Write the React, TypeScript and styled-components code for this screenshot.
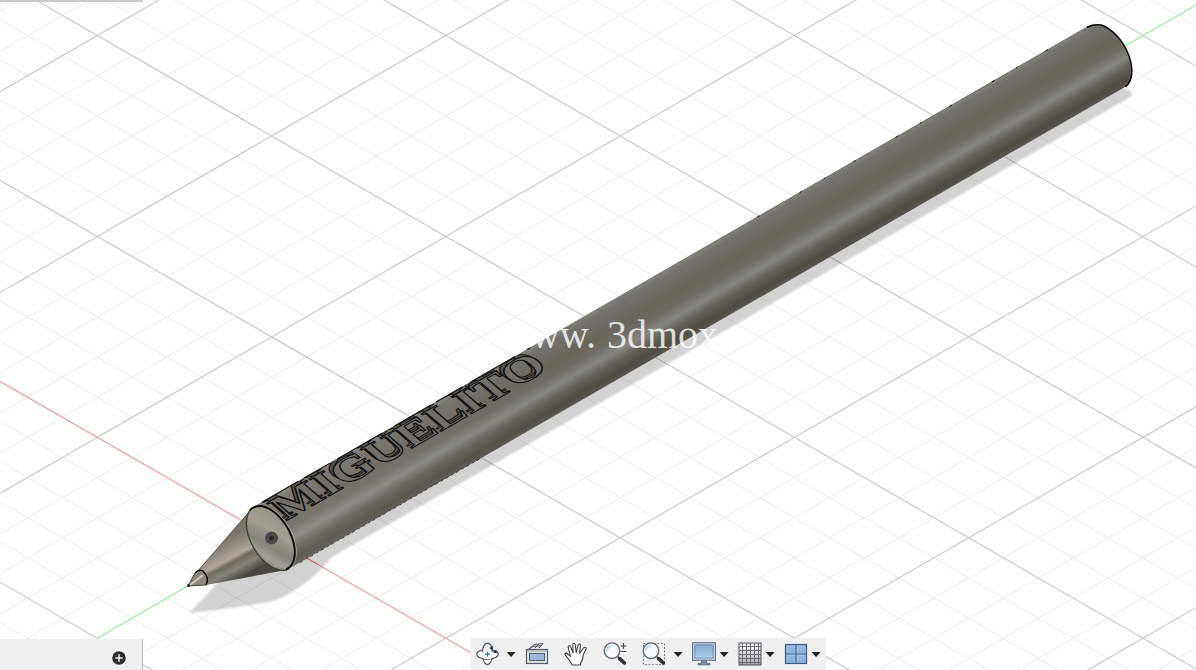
import React from "react";
import styled, { createGlobalStyle } from "styled-components";

const GlobalStyle = createGlobalStyle`
  body {
    margin: 0;
    background: #fefefe;
    font-family: "Liberation Sans", Arial, sans-serif;
  }
`;

const Workspace = styled.main`
  display: grid;
  grid-template: 100vh / 100%;
  overflow: hidden;
`;

const Canvas = styled.svg`
  grid-area: 1 / 1;
  width: 100%;
  height: 100%;
  display: block;
`;

const Chrome = styled.div`
  grid-area: 1 / 1;
  z-index: 1;
  display: flex;
  flex-direction: column;
  justify-content: space-between;
  pointer-events: none;
`;

const BrowserEdge = styled.div`
  width: 143px;
  height: 2px;
  background: #c9c9c9;
`;

const BottomRow = styled.div`
  display: grid;
  grid-template-columns: 143px 1fr;
  align-items: end;
`;

const CommentsPanel = styled.section`
  display: flex;
  align-items: center;
  justify-content: flex-end;
  height: 31px;
  box-sizing: border-box;
  padding: 6px 15px 0 0;
  background: #f0f0f0;
  border-right: 1px solid #bdbdbd;
`;

const ToolbarSlot = styled.div`
  display: flex;
  justify-content: center;
  padding-right: 42px;
`;

const Toolbar = styled.nav`
  display: flex;
  align-items: center;
  height: 32px;
  box-sizing: border-box;
  padding: 0 0 0 5px;
  background: #f0f0f0;
`;

const ToolGroup = styled.div<{ $menu: boolean; $gap: number }>`
  display: flex;
  align-items: center;
  gap: ${(p) => p.$gap}px;
  margin-right: ${(p) => (p.$menu ? 7 : 15)}px;
  &:last-child {
    margin-right: 3px;
  }
`;

const IconButton = styled.button<{ $width: number }>`
  display: flex;
  align-items: center;
  justify-content: center;
  width: ${(p) => p.$width}px;
  height: ${(p) => Math.max(p.$width, 16)}px;
  padding: 0;
  border: 0;
  background: transparent;
  pointer-events: auto;
  cursor: pointer;
`;

/* Isometric ground grid: one major cell is 2 * CELL_X wide and 2 * CELL_Y high */
const CELL_X = 174.27;
const CELL_Y = 100.45;
const SLOPE = CELL_Y / CELL_X;
const STEP = (CELL_Y * 2) / 5;
const ORIGIN = { x: 271.6, y: 537.8 };

function GridLines() {
  const lines: React.ReactNode[] = [];
  const right = 1196;
  for (const major of [false, true]) {
    for (let i = -40; i <= 40; i++) {
      if ((i % 5 === 0) !== major || i === 0) continue;
      for (const dir of [1, -1]) {
        const y0 = ORIGIN.y + i * STEP - dir * SLOPE * ORIGIN.x;
        lines.push(
          <line
            key={`${dir}:${i}`}
            x1={0}
            y1={y0}
            x2={right}
            y2={y0 + dir * SLOPE * right}
            stroke={major ? "#c8c8c8" : "#ececec"}
            strokeWidth={major ? 1.1 : 1}
          />
        );
      }
    }
  }
  return <g>{lines}</g>;
}

const BODY =
  "M253.8 507.1 L1090 25.3 A35.5 20.5 60 0 1 1125.4 86.7 L289.3 568.6 A35.5 20.5 60 0 0 253.8 507.1Z";

/* The name lies on the isometric plane of the pen; the floor of the cut sits behind its rim */
const ENGRAVED_RIM = "matrix(0.866 -0.5 0.6 0.52 286 521)";
const ENGRAVED_FLOOR = "matrix(0.866 -0.5 0.6 0.52 282 519)";

function Pen() {
  return (
    <g>
      <defs>
        <linearGradient id="body" gradientUnits="userSpaceOnUse" x1="253.8" y1="507" x2="289.3" y2="568.6">
          <stop offset="0" stopColor="#83837e" />
          <stop offset="0.08" stopColor="#72716b" />
          <stop offset="0.35" stopColor="#69665c" />
          <stop offset="0.5" stopColor="#6d6b63" />
          <stop offset="0.65" stopColor="#868781" />
          <stop offset="0.78" stopColor="#625f56" />
          <stop offset="0.92" stopColor="#4f4c43" />
          <stop offset="1" stopColor="#57554c" />
        </linearGradient>
        <linearGradient id="sheen" gradientUnits="userSpaceOnUse" x1="270" y1="538" x2="560" y2="371">
          <stop offset="0" stopColor="#b5b1a8" stopOpacity="0.18" />
          <stop offset="1" stopColor="#b5b1a8" stopOpacity="0" />
        </linearGradient>
        <linearGradient id="cone" gradientUnits="userSpaceOnUse" x1="222" y1="540" x2="242" y2="577">
          <stop offset="0" stopColor="#77736a" />
          <stop offset="0.28" stopColor="#979086" />
          <stop offset="0.48" stopColor="#b1a698" />
          <stop offset="0.58" stopColor="#6e6b62" />
          <stop offset="0.76" stopColor="#85837a" />
          <stop offset="1" stopColor="#494840" />
        </linearGradient>
        <linearGradient id="disc" gradientUnits="userSpaceOnUse" x1="255" y1="508" x2="288" y2="568">
          <stop offset="0" stopColor="#8e8a80" />
          <stop offset="0.4" stopColor="#a39d92" />
          <stop offset="0.62" stopColor="#85837a" />
          <stop offset="0.78" stopColor="#a0a097" />
          <stop offset="1" stopColor="#66645b" />
        </linearGradient>
        <filter id="soft" x="-5%" y="-5%" width="110%" height="110%">
          <feGaussianBlur stdDeviation="0.9" />
        </filter>
        <clipPath id="bodyClip">
          <path d={BODY} />
        </clipPath>
      </defs>

      <path
        d="M189 613 L225 575 L300 540 L1100 82 L1124 88 Q1133 92 1132 96 L740 322 L522 448 L332 557 Q306 588 276 600 Q260 605 189 613Z"
        fill="#000"
        opacity="0.17"
        filter="url(#soft)"
      />
      <line x1="296" y1="551.9" x2="318" y2="564.5" stroke="#cf6a6a" />

      <path d="M250.5 510 L193 576 L188 586 L206 585 L286 570 L297 545 Z" fill="url(#cone)" />
      <path d="M250 511 L196 573" stroke="#55534b" strokeWidth="0.8" fill="none" />

      <path d={BODY} fill="url(#body)" />
      <path d={BODY} fill="url(#sheen)" />
      <path d="M253.8 507.1 L1090 25.3" stroke="#5b5952" strokeWidth="0.7" fill="none" />
      <path d="M1087 27.4 Q1093 23.8 1101 25 A35.5 20.5 60 0 1 1125.4 86.7" stroke="#080808" strokeWidth="1.5" fill="none" />
      <path d="M757 217.3 L1074 34.6" stroke="#1d1c19" strokeWidth="1" strokeDasharray="3 46 3 25 2 32" fill="none" />
      <path d="M300 562.5 L480 458.7" stroke="#35332d" strokeWidth="0.9" strokeDasharray="3 4 2 3" fill="none" />

      <g
        clipPath="url(#bodyClip)"
        fontFamily='"Liberation Serif", "Times New Roman", serif'
        fontWeight="700"
        fontSize="51"
        stroke="#0b0b0a"
      >
        <text transform={ENGRAVED_FLOOR} fill="#56544c" strokeWidth="1.1">
          MIGUELITO
        </text>
        <text transform={ENGRAVED_RIM} fill="#716f67" strokeWidth="1.4" aria-hidden="true">
          MIGUELITO
        </text>
      </g>
      <path d="M262 502.3 L530 347.9" stroke="#141310" strokeWidth="1.1" strokeDasharray="42 6 30 9 52 14" fill="none" />

      <ellipse cx="271.6" cy="537.8" rx="35.5" ry="20.5" transform="rotate(60 271.6 537.8)" fill="url(#disc)" />
      <path d="M253.8 507.1 A35.5 20.5 60 0 0 289.3 568.6" stroke="#3d3b37" strokeWidth="1.3" fill="none" />
      <path d="M250 510 Q254 505.5 262 506 A35.5 20.5 60 0 1 286 569.5" stroke="#090909" strokeWidth="1.9" fill="none" />
      <circle cx="271.6" cy="538" r="6.5" fill="#4d494a" />
      <circle cx="271.6" cy="538" r="2.4" fill="#29272a" />

      <path d="M188 586 L195 573 Q202 568 206 575 Q209 581 206 585Z" fill="#8e877d" />
      <path d="M190 585 L203 575" stroke="#d3c9ba" strokeWidth="2" />
      <path d="M195 573 Q199 569 203 571 Q210 578 206 585" stroke="#080808" strokeWidth="1.4" fill="none" />
      <path d="M195 573 L188 586 L206 585" stroke="#46443f" strokeWidth="0.9" fill="none" />
      <circle cx="188.5" cy="585.6" r="1.4" fill="#111" />
    </g>
  );
}

function Watermark() {
  return (
    <g
      fontFamily='"Liberation Serif", "Times New Roman", serif'
      fontSize="40"
      fill="#fefefe"
      fillOpacity="0.82"
    >
      <text x="596" y="348" textAnchor="end">www.</text>
      <text x="607" y="348">3dmox</text>
    </g>
  );
}

function Scene() {
  return (
    <Canvas viewBox="0 0 1196 670" preserveAspectRatio="xMidYMid slice" role="img" aria-label="Engraved pen model">
      <rect width="1196" height="670" fill="#fefefe" />
      <GridLines />
      <line x1="0" y1="381.3" x2="471" y2="652.7" stroke="#ee9c9c" strokeWidth="1.2" />
      <line x1="97.3" y1="638.3" x2="1196" y2="5" stroke="#9cf09c" strokeWidth="1.3" />
      <Pen />
      <Watermark />
    </Canvas>
  );
}

function OrbitIcon() {
  return (
    <svg width="24" height="24" viewBox="0 0 24 24" fill="none" stroke="#4d5560" strokeWidth="1.1">
      <ellipse cx="11.5" cy="12" rx="5" ry="10.6" fill="#fafafa" />
      <ellipse cx="11.5" cy="12.2" rx="10.8" ry="5" fill="#fafafa" />
      <path d="M6.6 10 Q7 1.4 11.5 1.4 Q16 1.4 16.4 10" fill="#fafafa" />
      <path d="M8 15 L15 15" stroke="#fafafa" strokeWidth="4" />
      <path d="M11.5 9.7v5M9 12.2h5" stroke="#2f76bd" strokeWidth="1.3" />
      <path d="M13 6 l4-2 v4.5z M16.5 10 l4-2.5 v4z" fill="#1b3554" stroke="none" />
    </svg>
  );
}

function LookAtIcon() {
  return (
    <svg width="24" height="24" viewBox="0 0 24 24" fill="none" stroke="#555b61">
      <path d="M4 7 L9 2.5 L18 1.5 L14 6" fill="#dfe1e3" />
      <path d="M3 7.5 L8 4.5 L17 3.5 M10 6 l4 -4" />
      <rect x="1.5" y="7.5" width="21" height="14" fill="#e0e3e6" strokeWidth="1.2" />
      <rect x="4.5" y="11.5" width="15" height="7" fill="#9eb9d8" stroke="#53606e" />
      <path d="M2 9h20" stroke="#a2a6aa" />
    </svg>
  );
}

function HandIcon() {
  return (
    <svg width="24" height="24" viewBox="0 0 24 24">
      <path
        d="M8 23 C7.5 20 5 18.4 3.4 15.8 L1.2 12.8 C.5 11.5 2 10.6 3.2 11.6 L6.4 14.4 L4.2 5.3 C4 3.6 6 3.2 6.6 4.8 L9.1 11 L8.8 2.6 C8.8 .8 11 .8 11.2 2.5 L12.2 10.6 L14.2 3 C14.7 1.3 16.7 1.8 16.4 3.5 L15.5 11.3 L19.5 6 C20.5 4.6 22.9 5.5 22.1 7.1 L19.3 12.7 C18.7 15.6 18.8 19 16.7 20.5 L16.5 23 Z"
        fill="#fff"
        stroke="#404448"
        strokeWidth="1.1"
        strokeLinejoin="round"
      />
    </svg>
  );
}

function Magnifier() {
  return (
    <>
      <circle cx="9" cy="8.7" r="7.8" fill="#f6fafc" stroke="#626a70" strokeWidth="1.3" />
      <path d="M4 9 Q4 4.5 9 3.5" stroke="#c4dcec" strokeWidth="1.8" fill="none" />
      <path d="M14.2 14 L17 17" stroke="#6a7075" strokeWidth="2" />
      <path d="M16.6 16.6 L21.4 21" stroke="#303235" strokeWidth="3.6" strokeLinecap="round" />
    </>
  );
}

function ZoomIcon() {
  return (
    <svg width="24" height="24" viewBox="0 0 24 24">
      <Magnifier />
      <path d="M20.5 1v6M17.8 4h5.6M17.8 9.5h5.6" stroke="#474b4e" strokeWidth="1.2" />
    </svg>
  );
}

function ZoomWindowIcon() {
  return (
    <svg width="24" height="24" viewBox="0 0 24 24">
      <rect x="1.5" y="1.5" width="21" height="21" fill="none" stroke="#7c8084" strokeDasharray="2 1.5" />
      <Magnifier />
    </svg>
  );
}

function DisplayIcon() {
  return (
    <svg width="24" height="24" viewBox="0 0 24 24">
      <defs>
        <linearGradient id="screen" x1="0" y1="0" x2="0" y2="1">
          <stop offset="0" stopColor="#86abd6" />
          <stop offset="1" stopColor="#b3cfec" />
        </linearGradient>
      </defs>
      <rect x="0.7" y="0.8" width="22.6" height="17.4" fill="#e9eef3" stroke="#51667d" strokeWidth="1.1" />
      <rect x="2.8" y="2.8" width="18.4" height="13.3" fill="url(#screen)" stroke="#688bb3" />
      <path d="M9.5 18.5h5v2.8h3.5v1.6H6v-1.6h3.5z" fill="#7995a9" stroke="#48657a" strokeWidth="0.7" />
    </svg>
  );
}

function GridIcon() {
  const marks = [4.5, 8.5, 12.5, 16.5, 20.5];
  return (
    <svg width="24" height="24" viewBox="0 0 24 24">
      <defs>
        <linearGradient id="sheet" x1="0" y1="0" x2="0" y2="1">
          <stop offset="0" stopColor="#fff" />
          <stop offset="1" stopColor="#a9a9b1" />
        </linearGradient>
      </defs>
      <rect x="1" y="1" width="22" height="22" fill="url(#sheet)" stroke="#4c4c55" />
      <path d={marks.map((m) => `M${m} 1v22M1 ${m}h22`).join("")} stroke="#60606a" strokeWidth="0.9" />
    </svg>
  );
}

function ViewportsIcon() {
  return (
    <svg width="24" height="24" viewBox="0 0 24 24">
      <rect x="1.5" y="2.5" width="21" height="19" fill="#8eb4df" stroke="#3d5d86" strokeWidth="1.2" />
      <path d="M12 3v18M2 12h20" stroke="#4a6f9f" strokeWidth="1.2" />
      <path d="M3.5 10.5v-6h7M13.5 10.5v-6h7M3.5 19.5v-6h7M13.5 19.5v-6h7" fill="none" stroke="#a6c6ea" />
    </svg>
  );
}

function CaretIcon() {
  return (
    <svg width="14" height="16" viewBox="0 0 14 16">
      <path d="M2.6 6h9L7.1 11z" fill="#202020" />
    </svg>
  );
}

type Tool = { name: string; icon: () => React.ReactElement; menuGap?: number };

const TOOLS: Tool[] = [
  { name: "Orbit", icon: OrbitIcon, menuGap: 4 },
  { name: "Look at", icon: LookAtIcon },
  { name: "Pan", icon: HandIcon },
  { name: "Zoom", icon: ZoomIcon },
  { name: "Zoom window", icon: ZoomWindowIcon, menuGap: 5 },
  { name: "Display settings", icon: DisplayIcon, menuGap: 1 },
  { name: "Grid and snaps", icon: GridIcon, menuGap: 1 },
  { name: "Viewports", icon: ViewportsIcon, menuGap: 1 },
];

export default function App() {
  return (
    <>
      <GlobalStyle />
      <Workspace>
        <Scene />
        <Chrome>
          <BrowserEdge />
          <BottomRow>
            <CommentsPanel aria-label="Comments">
              <IconButton $width={16} type="button" aria-label="Add comment">
                <svg width="16" height="16" viewBox="0 0 16 16">
                  <circle cx="8" cy="8" r="6.8" fill="#2c2c2c" />
                  <path d="M8 4.3v7.4M4.3 8h7.4" stroke="#f0f0f0" strokeWidth="1.5" />
                </svg>
              </IconButton>
            </CommentsPanel>
            <ToolbarSlot>
              <Toolbar aria-label="Navigation">
                {TOOLS.map(({ name, icon: Icon, menuGap }) => (
                  <ToolGroup key={name} $menu={menuGap !== undefined} $gap={menuGap ?? 0}>
                    <IconButton $width={24} type="button" aria-label={name}>
                      <Icon />
                    </IconButton>
                    {menuGap !== undefined && (
                      <IconButton $width={14} type="button" aria-haspopup="menu" aria-label={`${name} options`}>
                        <CaretIcon />
                      </IconButton>
                    )}
                  </ToolGroup>
                ))}
              </Toolbar>
            </ToolbarSlot>
          </BottomRow>
        </Chrome>
      </Workspace>
    </>
  );
}
